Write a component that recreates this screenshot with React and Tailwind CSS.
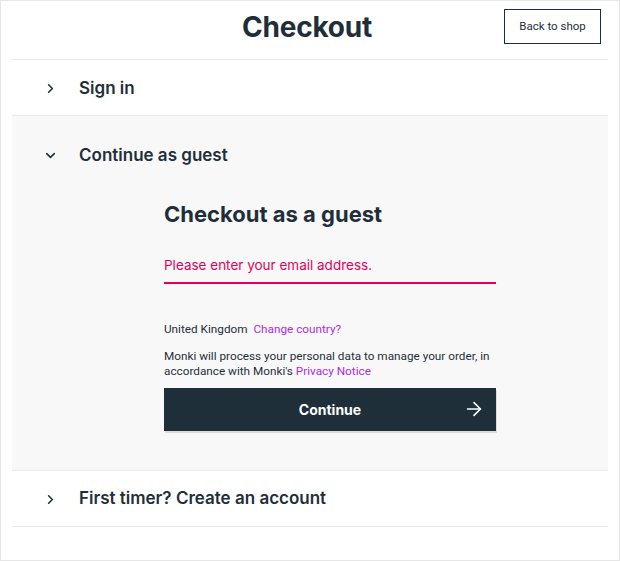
import React from "react";
import { ChevronRight, ChevronDown, ArrowRight } from "lucide-react";

const head = { fontFamily: "Inter, 'Noto Sans', sans-serif" };
const body = { fontFamily: "Roboto, 'Liberation Sans', sans-serif" };

const Row = ({ open, children }) => (
  <div className="flex items-center h-[55px] pt-[2px] pl-[31px] text-[#1f2f3a]">
    {open ? (
      <ChevronDown size={15} strokeWidth={2.5} />
    ) : (
      <ChevronRight size={15} strokeWidth={2.5} />
    )}
    <span className="ml-[21px] text-[17px] font-semibold" style={head}>
      {children}
    </span>
  </div>
);

export default function App() {
  return (
    <div className="w-[620px] h-[561px] border border-[#e6e6e6] bg-white text-[#1f2f3a]">
      <div className="mx-[11px] grid grid-cols-[1fr_auto_1fr] items-start h-[58px] pt-[8px]">
        <div />
        <h1 className="pr-[6px] text-[28px] leading-[36px] font-bold tracking-[-0.2px]" style={head}>
          Checkout
        </h1>
        <button
          className="justify-self-end mr-[7px] w-[97px] h-[35px] border-[1.5px] border-[#1f2f3a] text-[11.5px] text-[#1f2f3a]"
          style={body}
        >
          Back to shop
        </button>
      </div>

      <div className="mx-[11px] border-t border-[#e8e8e8]">
        <Row>Sign in</Row>
      </div>

      <div className="mx-[11px] border-t border-[#ececec] bg-[#f8f8f8] pb-[39px]">
        <div className="pt-[11px]">
          <Row open>Continue as guest</Row>
        </div>
        <div className="ml-[152px] w-[332px] pt-[18px]">
          <h2 className="text-[22px] font-bold leading-[28px]" style={head}>
            Checkout as a guest
          </h2>
          <div className="mt-[20px] h-[36px] flex items-center border-b-2 border-b-[#e5005b]">
            <span className="text-[13.5px] text-[#e5005b]" style={head}>
              Please enter your email address.
            </span>
          </div>
          <p className="mt-[37px] text-[11.75px] text-[#1f2f3a]" style={body}>
            United Kingdom{" "}
            <span className="ml-[3px] text-[#a82ee0]">Change country?</span>
          </p>
          <p className="mt-[10px] text-[11.75px] leading-[15px] text-[#1f2f3a]" style={body}>
            Monki will process your personal data to manage your order, in accordance with Monki's{" "}
            <span className="text-[#a82ee0]">Privacy Notice</span>
          </p>
          <button className="mt-[9px] relative w-full h-[43px] bg-[#1f2f3a] text-white flex items-center justify-center shadow-[1px_2px_0_#dcdcdc]">
            <span className="text-[14px] font-bold" style={head}>
              Continue
            </span>
            <ArrowRight
              size={22}
              strokeWidth={1.75}
              className="absolute right-[11px] top-1/2 -translate-y-1/2"
            />
          </button>
        </div>
      </div>

      <div className="mx-[11px] border-t border-[#ececec]">
        <Row>First timer? Create an account</Row>
      </div>
      <div className="mx-[11px] border-t border-[#e8e8e8]" />
    </div>
  );
}
